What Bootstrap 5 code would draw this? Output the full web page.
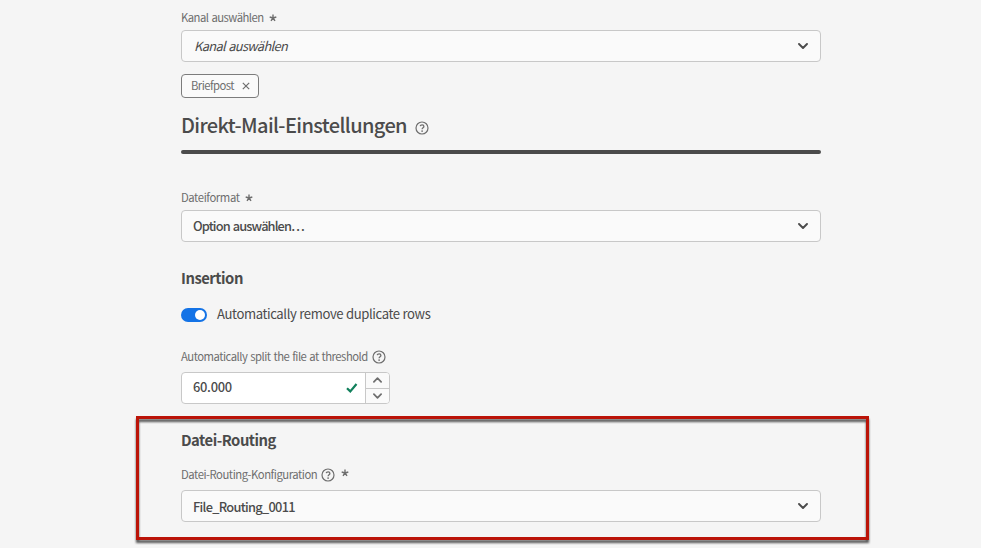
<!DOCTYPE html>
<html lang="de">
<head>
<meta charset="utf-8">
<meta name="viewport" content="width=device-width, initial-scale=1">
<title>Direkt-Mail-Einstellungen</title>
<link href="https://cdn.jsdelivr.net/npm/bootstrap@5.3.0/dist/css/bootstrap.min.css" rel="stylesheet">
<style>
body{background:#f5f5f5;color:#4b4b4b;font-family:"Noto Sans CJK SC","Noto Sans",sans-serif;height:548px;overflow:hidden}
.settings{width:640px;margin-left:181px;padding-top:8px}
.lbl{font-size:11.3px;line-height:20px;height:22px;color:#6e6e6e}
.lbl svg,.ttl svg{flex:none}
.lbl>span{margin-top:-1px}
.lbl .req{margin:6px 0 0 5px}
.fld{height:32px;border:1px solid #c8c8c8;border-radius:4px;background:#fafafa;padding:0 12px;font-size:12.8px;line-height:28px;width:100%;text-align:left;color:#4b4b4b}
.chip{height:24px;border:1px solid #7c7c7c;border-radius:4px;background:#fafafa;padding:0 8px 0 9px;font-size:11.3px;color:#6e6e6e;margin-top:12px;width:78px}
.ttl{font-size:20px;line-height:24px;font-weight:500;margin:15px 0 0;height:26px}
.rule{height:4px;border-radius:2px;background:#4b4b4b;margin:11px 0 34px}
.sub{font-size:14.8px;line-height:20px;height:22px;font-weight:700;margin:0;letter-spacing:-.48px}
.sw{width:26px;height:14px;border-radius:7px;background:#1473e6;padding:2px}
.sw i{width:10px;height:10px;border-radius:50%;background:#fff}
.num{width:209px;height:32px;border:1px solid #c8c8c8;border-radius:4px;background:#fff;font-size:12.9px;overflow:hidden}
.steps{width:24px;border-left:1px solid #c8c8c8;background:#fafafa;color:#6e6e6e}
.steps span+span{border-top:1px solid #c8c8c8}
.t-kanal{letter-spacing:-.54px;word-spacing:1px}
.t-ital{letter-spacing:-.62px;word-spacing:1px}
.t-brief{letter-spacing:-.57px;margin-top:-1px}
.t-ttl{letter-spacing:-.62px}
.t-datei{letter-spacing:-.42px}
.t-opt{letter-spacing:-.88px;word-spacing:1px;font-weight:500;margin-left:-1px}
.t-auto{letter-spacing:-.39px;font-size:13.100px;word-spacing:.3px;margin:-2px 0 0 10px}
.t-split{letter-spacing:-.5px;word-spacing:.8px}
.t-num{letter-spacing:-.3px;font-weight:500;margin-top:-2px}
.t-conf{letter-spacing:-.47px}
.t-file{letter-spacing:-.7px;font-weight:500;margin:2px 0 0 -1px}
.routing{margin-top:12px;padding-top:14px;height:125px}
.routing::before{content:"";position:absolute;left:-45px;top:0;width:733px;height:124px;border:3px solid #bb1408;filter:drop-shadow(0 3px 1px rgba(0,0,0,.65));pointer-events:none}
</style>
</head>
<body>
<svg class="d-none">
<symbol id="help" viewBox="0 0 14 14"><circle cx="7" cy="7" r="6" fill="none" stroke="currentColor" stroke-width="1.2"/><path d="M5.2 5.2C5.5 3.5 8.9 3.4 8.9 5.4 8.9 6.7 7.1 6.7 7.1 8.2" fill="none" stroke="currentColor" stroke-width="1.3"/><circle cx="7.1" cy="10.1" r=".85" fill="currentColor"/></symbol>
<symbol id="star" viewBox="0 0 8 8"><path d="M4 4V.5M4 4L.7 3M4 4l3.3-1M4 4L2 6.9M4 4l2 2.900" fill="none" stroke="currentColor" stroke-width="1.4"/></symbol>
<symbol id="chev" viewBox="0 0 10 6"><path d="M1 1l4 4 4-4" fill="none" stroke="currentColor" stroke-width="1.9" stroke-linecap="round" stroke-linejoin="round"/></symbol>
</svg>
<main class="settings">
<label class="lbl d-flex"><span class="t-kanal">Kanal auswählen</span><svg class="req" width="8" height="8"><use href="#star"/></svg></label>
<button class="fld d-flex align-items-center justify-content-between"><em class="t-ital">Kanal auswählen</em><svg width="10" height="6"><use href="#chev"/></svg></button>
<div class="chip d-flex align-items-center justify-content-between"><span class="t-brief">Briefpost</span><svg width="8" height="8" viewBox="0 0 8 8"><path d="M.8.8l6.400 6.400M7.200.8L.8 7.200" stroke="currentColor" stroke-width="1.2"/></svg></div>
<h1 class="ttl d-flex"><span class="t-ttl">Direkt-Mail-Einstellungen</span><svg style="margin:8px 0 0 8px" width="14" height="14" color="#6e6e6e"><use href="#help"/></svg></h1>
<div class="rule"></div>
<label class="lbl d-flex"><span class="t-datei">Dateiformat</span><svg class="req" width="8" height="8"><use href="#star"/></svg></label>
<button class="fld d-flex align-items-center justify-content-between"><span class="t-opt">Option auswählen…</span><svg width="10" height="6"><use href="#chev"/></svg></button>
<h2 class="sub t-ins" style="margin-top:26px">Insertion</h2>
<div class="d-flex align-items-center" style="margin-top:14px;height:22px"><span class="sw d-flex justify-content-end"><i></i></span><span class="t-auto">Automatically remove duplicate rows</span></div>
<label class="lbl d-flex" style="margin-top:21px;height:25px"><span class="t-split">Automatically split the file at threshold</span><svg class="ms-1" style="margin-top:3px" width="14" height="14"><use href="#help"/></svg></label>
<div class="num d-flex"><div class="flex-grow-1 d-flex align-items-center justify-content-between" style="padding:0 7px 0 11px"><span class="t-num">60.000</span><svg width="12" height="10" viewBox="0 0 12 10"><path d="M1 5.200l3.300 3.200L10.500 1" fill="none" stroke="#12805c" stroke-width="2.200"/></svg></div>
<div class="steps d-flex flex-column"><span class="flex-fill d-flex align-items-center justify-content-center"><svg width="9" height="6" style="transform:rotate(180deg)"><use href="#chev"/></svg></span><span class="flex-fill d-flex align-items-center justify-content-center"><svg width="9" height="6"><use href="#chev"/></svg></span></div></div>
<section class="routing position-relative">
<h2 class="sub t-rout">Datei-Routing</h2>
<label class="lbl d-flex" style="margin-top:13px;height:25px"><span class="t-conf">Datei-Routing-Konfiguration</span><svg class="ms-1" style="margin-top:3px" width="14" height="14"><use href="#help"/></svg><svg style="margin:4px 0 0 6px" width="8" height="8"><use href="#star"/></svg></label>
<button class="fld d-flex align-items-center justify-content-between"><span class="t-file">File_Routing_0011</span><svg width="10" height="6"><use href="#chev"/></svg></button>
</section>
</main>
<script src="https://cdn.jsdelivr.net/npm/bootstrap@5.3.0/dist/js/bootstrap.bundle.min.js"></script>
</body>
</html>
